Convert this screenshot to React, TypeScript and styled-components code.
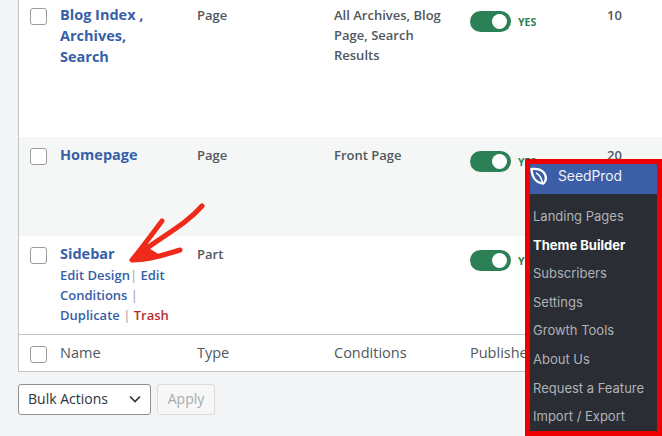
import { FC, ReactNode } from "react";
import styled, { createGlobalStyle } from "styled-components";

const GlobalStyle = createGlobalStyle`
  html, body {
    margin: 0;
    padding: 0;
    width: 662px;
    height: 436px;
    overflow: hidden;
    background: #f3f4f5;
  }
`;

const Page = styled.div`
  position: relative;
  width: 662px;
  height: 436px;
  overflow: hidden;
  padding-left: 18px;
  box-sizing: border-box;
  font-family: "Open Sans", sans-serif;
  color: #50575e;
`;

// the list runs on above the crop, so the first row starts a bit off the page
const Table = styled.div`
  width: 660px;
  margin-top: -3px;
  background: #fff;
  border: 1px solid #c3c4c7;
  border-top: 0;
  border-right: 0;
`;

const Row = styled.div<{ $height: number; $shaded?: boolean }>`
  display: grid;
  grid-template-columns: 41px 137px 137px 136px 137px 60px;
  height: ${(p) => p.$height}px;
  background: ${(p) => (p.$shaded ? "#f5f7f7" : "#fff")};
  box-sizing: border-box;
`;

const Cell = styled.div<{ $top?: number; $right?: number }>`
  padding-top: ${(p) => p.$top ?? 8}px;
  padding-right: ${(p) => p.$right ?? 0}px;
  font-size: 13px;
  font-weight: 600;
  line-height: 20px;
  min-width: 0;
`;

const CheckCell = styled.div`
  padding: 11px 0 0 11px;
`;

const Check = styled.span`
  display: block;
  width: 15px;
  height: 15px;
  border: 1px solid #9a9ca1;
  border-radius: 3px;
  background: #fff;
`;

const Title = styled.a`
  display: block;
  color: #3760a8;
  font-size: 14.5px;
  font-weight: 700;
  line-height: 21px;
  padding-right: 30px;
`;

const Actions = styled.div`
  font-size: 13px;
  font-weight: 600;
  line-height: 20px;
  color: #3760a8;
  margin-top: 1px;
  padding-right: 20px;
`;

const Sep = styled.span`
  color: #9a9ca1;
  font-weight: 400;
`;

const Trash = styled.span`
  color: #b32d2e;
`;

const PublishCell = styled.div`
  display: flex;
  align-items: center;
  align-self: start;
  gap: 7px;
  padding-top: 14px;
`;

const Toggle = styled.span`
  display: flex;
  justify-content: flex-end;
  align-items: center;
  width: 41px;
  height: 21px;
  padding-right: 4px;
  box-sizing: border-box;
  border-radius: 11px;
  background: #2c8055;

  &::after {
    content: "";
    width: 15px;
    height: 15px;
    border-radius: 50%;
    background: #fff;
  }
`;

const YesLabel = styled.span`
  color: #2c8055;
  font-size: 10.5px;
  font-weight: 700;
`;

const FootRow = styled(Row)`
  border-top: 1px solid #c3c4c7;
`;

const FootCell = styled.div`
  font-size: 14.5px;
  font-weight: 400;
  line-height: 36px;
  color: #50575e;
  white-space: nowrap;
`;

const BulkBar = styled.div`
  display: flex;
  gap: 6px;
  margin-top: 12px;
`;

const BulkSelect = styled.div`
  display: flex;
  align-items: center;
  justify-content: space-between;
  width: 133px;
  height: 31px;
  padding: 0 8px 2px 9px;
  box-sizing: border-box;
  border: 1px solid #8c8f94;
  border-radius: 3px;
  background: #fff;
  color: #2c3338;
  font-size: 14px;
`;

const ApplyButton = styled.div`
  display: flex;
  align-items: center;
  justify-content: center;
  width: 58px;
  height: 31px;
  padding-bottom: 2px;
  box-sizing: border-box;
  border: 1px solid #dcdcde;
  border-radius: 3px;
  background: #f6f7f7;
  color: #a7aaad;
  font-size: 14px;
`;

const Arrow = styled.svg`
  position: absolute;
  left: 120px;
  top: 198px;
`;

const MenuPanel = styled.div`
  position: absolute;
  left: 525px;
  top: 159px;
  width: 137px;
  height: 277px;
  box-sizing: border-box;
  border: 5px solid #ee0000;
  background: #2a2d33;
  font-family: Inter, sans-serif;
`;

const MenuHead = styled.div`
  display: flex;
  align-items: center;
  gap: 10px;
  height: 30px;
  padding: 0 0 6px 0;
  box-sizing: border-box;
  background: #3b5ea6;
  color: #f0f2f7;
  font-size: 13.8px;
`;

const MenuList = styled.div`
  display: flex;
  flex-direction: column;
  padding-top: 8px;
`;

const MenuItem = styled.div<{ $active?: boolean }>`
  height: 28.6px;
  padding-left: 3px;
  color: ${(p) => (p.$active ? "#ffffff" : "#b0b2b6")};
  font-size: 13px;
  font-weight: ${(p) => (p.$active ? 700 : 400)};
  line-height: 28px;
  white-space: nowrap;
`;

const SeedLogo: FC = () => (
  <svg width="18" height="18" viewBox="0 0 18 18" fill="none" stroke="#fff" strokeLinejoin="round">
    <path d="M1.500 2C7 1.500 12 2.500 14.500 6.500C16.500 10 16 14 13.500 16.500C6.500 16 2 10.500 1.500 2Z" strokeWidth="2.400" />
    <path d="M6 6C9.500 7.500 11.500 11 12.500 16" strokeWidth="1.500" />
  </svg>
);

const Publish: FC = () => (
  <PublishCell>
    <Toggle />
    <YesLabel>YES</YesLabel>
  </PublishCell>
);

const menuItems = [
  "Landing Pages",
  "Theme Builder",
  "Subscribers",
  "Settings",
  "Growth Tools",
  "About Us",
  "Request a Feature",
  "Import / Export",
];

const TemplateRow: FC<{
  height: number;
  shaded?: boolean;
  title: ReactNode;
  type: string;
  conditions?: string;
  order?: string;
}> = ({ height, shaded, title, type, conditions, order }) => (
  <Row $height={height} $shaded={shaded}>
    <CheckCell>
      <Check />
    </CheckCell>
    <Cell $top={7}>{title}</Cell>
    <Cell>{type}</Cell>
    <Cell $right={16}>{conditions}</Cell>
    <Publish />
    <Cell>{order}</Cell>
  </Row>
);

export default function App() {
  return (
    <Page>
      <GlobalStyle />
      <Table>
        <TemplateRow
          height={140}
          title={<Title>Blog Index , Archives, Search</Title>}
          type="Page"
          conditions="All Archives, Blog Page, Search Results"
          order="10"
        />
        <TemplateRow
          height={99}
          shaded
          title={<Title>Homepage</Title>}
          type="Page"
          conditions="Front Page"
          order="20"
        />
        <TemplateRow
          height={98}
          title={
            <>
              <Title>Sidebar</Title>
              <Actions>
                Edit Design<Sep>|</Sep> Edit Conditions <Sep>|</Sep> Duplicate <Sep>|</Sep>{" "}
                <Trash>Trash</Trash>
              </Actions>
            </>
          }
          type="Part"
        />
        <FootRow $height={37}>
          <CheckCell>
            <Check />
          </CheckCell>
          <FootCell>Name</FootCell>
          <FootCell>Type</FootCell>
          <FootCell>Conditions</FootCell>
          <FootCell>Published</FootCell>
        </FootRow>
      </Table>
      <BulkBar>
        <BulkSelect>
          Bulk Actions
          <svg width="14" height="14" viewBox="0 0 14 14" fill="none">
            <path d="M2 4.500L7 9.500L12 4.500" stroke="#2c3338" strokeWidth="1.600" />
          </svg>
        </BulkSelect>
        <ApplyButton>Apply</ApplyButton>
      </BulkBar>
      <Arrow width="95" height="70" viewBox="0 0 95 70" fill="#f02a1a">
        <path
          d="M82 8C68 24 50 34 30 48L13 62M42 23C32 36 22 50 12 62C28 62 44 57 60 52"
          fill="none"
          stroke="#f02a1a"
          strokeWidth="5"
          strokeLinecap="round"
          strokeLinejoin="round"
        />
        <path d="M12 62L31 36L27 49L40 57Z" />
      </Arrow>
      <MenuPanel>
        <MenuHead>
          <SeedLogo />
          SeedProd
        </MenuHead>
        <MenuList>
          {menuItems.map((item) => (
            <MenuItem key={item} $active={item === "Theme Builder"}>
              {item}
            </MenuItem>
          ))}
        </MenuList>
      </MenuPanel>
    </Page>
  );
}
